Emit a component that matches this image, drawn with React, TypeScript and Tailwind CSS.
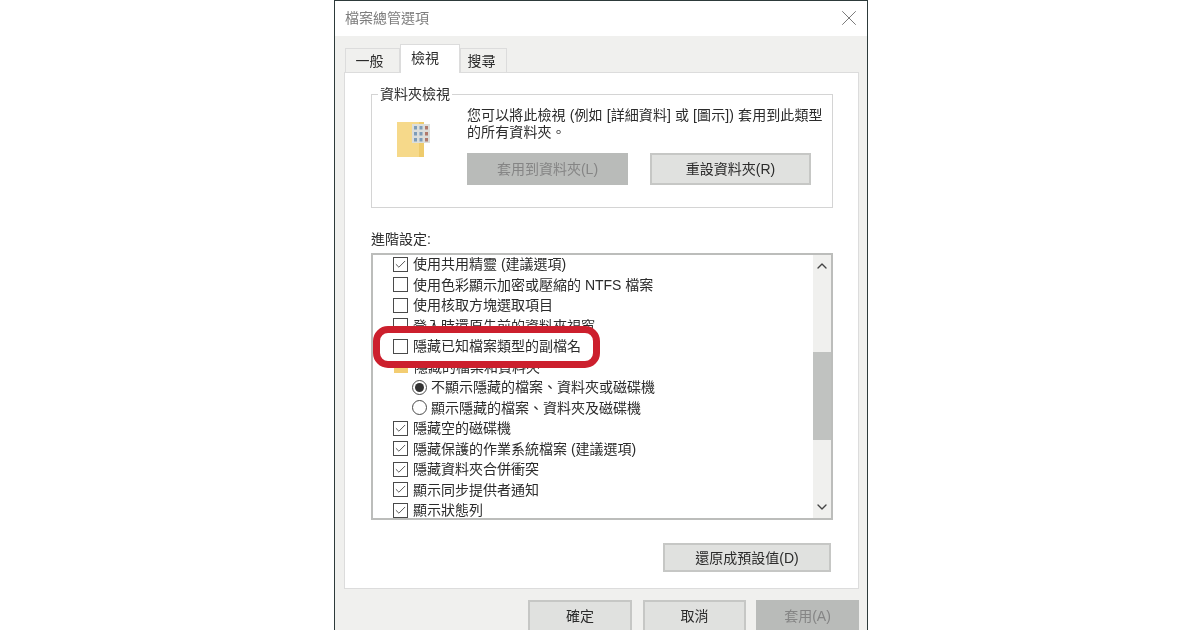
import { Check, ChevronDown, ChevronUp, X } from "lucide-react";
import type { ReactNode } from "react";

const cjk = "font-['Liberation_Sans','Noto_Sans_CJK_TC',sans-serif]";

function CheckBox({ checked }: { checked?: boolean }) {
  return (
    <span className="flex h-[15px] w-[15px] shrink-0 items-center justify-center border border-[#4a4a4a] bg-white">
      {checked && <Check size={13} strokeWidth={1.5} className="text-[#333]" />}
    </span>
  );
}

function Row({ checked, children }: { checked?: boolean; children: ReactNode }) {
  return (
    <div className="flex h-[20.5px] shrink-0 items-center gap-[5px] pl-[20px]">
      <CheckBox checked={checked} />
      <span className="whitespace-nowrap">{children}</span>
    </div>
  );
}

function Radio({ selected, children }: { selected?: boolean; children: ReactNode }) {
  return (
    <div className="flex h-[20.5px] shrink-0 items-center gap-[4px] pl-[39px]">
      <span className="flex h-[15px] w-[15px] shrink-0 items-center justify-center rounded-full border border-[#4a4a4a] bg-white">
        {selected && <span className="h-[9px] w-[9px] rounded-full bg-[#333]" />}
      </span>
      <span className="whitespace-nowrap">{children}</span>
    </div>
  );
}

function Button({ disabled, className, children }: { disabled?: boolean; className: string; children: ReactNode }) {
  return (
    <div
      className={`flex items-center justify-center border-2 text-sm ${
        disabled ? "border-[#b9bbb9] bg-[#b9bbb9] text-[#858585]" : "border-[#c6c7c5] bg-[#e0e1df] text-[#2b2b2b]"
      } ${className}`}
    >
      {children}
    </div>
  );
}

function FolderIcon() {
  return (
    <svg width="34" height="38" viewBox="0 0 34 38" className="shrink-0">
      <rect x="0" y="1" width="27" height="35" fill="#f6d98a" />
      <rect x="22" y="1" width="5" height="35" fill="#eecb6c" />
      <rect x="15" y="3" width="18" height="19" fill="#dcdedb" />
      {[5, 11, 17].flatMap((y) =>
        [17, 22.5, 28].map((x) => (
          <rect key={`${x}-${y}`} x={x} y={y} width="3" height="3.5" fill={x === 28 ? "#b07a6c" : "#7d9cb8"} />
        )),
      )}
    </svg>
  );
}

export default function App() {
  return (
    <div className={`flex h-[630px] w-[1200px] justify-center overflow-hidden bg-white text-sm text-[#2b2b2b] ${cjk}`}>
      <div className="ml-[2px] flex h-[631px] w-[534px] flex-col border border-b-0 border-[#2d3a3a] blur-[0.45px]">
        <div className="flex h-[35px] shrink-0 items-center justify-between bg-white pb-[2px] pl-[10px] pr-[5px] text-[#7d7d7d]">
          <span>檔案總管選項</span>
          <X size={26} strokeWidth={0.9} className="text-[#777]" />
        </div>

        <div className="flex flex-1 flex-col bg-[#f0f0ee] pl-[9px] pr-[8px]">
          <div className="flex h-[36px] shrink-0 items-end pl-px">
            <div className="flex h-[24px] w-[55px] items-center justify-center border border-b-0 border-[#dcdcdc] bg-[#f0f0ee] pr-[6px]">一般</div>
            <div className="relative z-10 -mb-px flex h-[29px] w-[60px] items-start justify-center border border-b-0 border-[#dcdcdc] bg-white pr-[10px] pt-[3px]">檢視</div>
            <div className="flex h-[24px] w-[47px] items-center justify-center border border-b-0 border-[#dcdcdc] bg-[#f0f0ee] pr-[4px]">搜尋</div>
          </div>

          <div className="flex h-[517px] shrink-0 flex-col border border-[#dcdcdc] bg-white pl-[26px] pr-[25px] pt-[21px]">
            <div className="relative flex h-[114px] shrink-0 gap-[36px] border border-[#d4d4d4] pl-[25px] pt-[12px]">
              <span className="absolute left-[6px] top-[-11px] bg-white px-[2px] leading-[20px]">資料夾檢視</span>
              <div className="pt-[14px]">
                <FolderIcon />
              </div>
              <div className="flex flex-col">
                <p className="w-[360px] leading-[17px] tracking-[0.1px]">您可以將此檢視 (例如 [詳細資料] 或 [圖示]) 套用到此類型的所有資料夾。</p>
                <div className="mt-[12px] flex gap-[22px]">
                  <Button disabled className="h-[32px] w-[161px]">套用到資料夾(L)</Button>
                  <Button className="h-[32px] w-[161px]">重設資料夾(R)</Button>
                </div>
              </div>
            </div>

            <div className="mt-[21px] h-[20px] shrink-0 leading-[20px]">進階設定:</div>

            <div className="mt-[4px] flex h-[267px] shrink-0 border-2 border-[#bcbdbb]">
              <div className="min-w-0 flex-1 overflow-hidden">
                <div className="-mt-px flex flex-col">
                  <Row checked>使用共用精靈 (建議選項)</Row>
                  <Row>使用色彩顯示加密或壓縮的 NTFS 檔案</Row>
                  <Row>使用核取方塊選取項目</Row>
                  <Row>登入時還原先前的資料夾視窗</Row>
                  <div className="relative z-10">
                    <div className="absolute left-0 top-[-10px] h-[42px] w-[227px] rounded-[15px] border-[7px] border-[#cc1f2d] bg-white" />
                    <div className="relative">
                      <Row>隱藏已知檔案類型的副檔名</Row>
                    </div>
                  </div>
                  <div className="flex h-[20.5px] shrink-0 items-center gap-[6px] pl-[21px]">
                    <span className="h-[12px] w-[14px] shrink-0 bg-[#f3cd72]" />
                    <span>隱藏的檔案和資料夾</span>
                  </div>
                  <Radio selected>不顯示隱藏的檔案、資料夾或磁碟機</Radio>
                  <Radio>顯示隱藏的檔案、資料夾及磁碟機</Radio>
                  <Row checked>隱藏空的磁碟機</Row>
                  <Row checked>隱藏保護的作業系統檔案 (建議選項)</Row>
                  <Row checked>隱藏資料夾合併衝突</Row>
                  <Row checked>顯示同步提供者通知</Row>
                  <Row checked>顯示狀態列</Row>
                </div>
              </div>
              <div className="flex w-[18px] shrink-0 flex-col bg-[#f0f0ee]">
                <div className="flex h-[97px] justify-center pt-[3px]">
                  <ChevronUp size={16} strokeWidth={2} className="text-[#444]" />
                </div>
                <div className="h-[88px] bg-[#c0c2c0]" />
                <div className="flex flex-1 items-end justify-center pb-[3px]">
                  <ChevronDown size={16} strokeWidth={2} className="text-[#444]" />
                </div>
              </div>
            </div>

            <div className="mt-[23px] flex justify-end pr-[2px]">
              <Button className="h-[29px] w-[168px]">還原成預設值(D)</Button>
            </div>
          </div>

          <div className="mt-[11px] flex justify-end gap-[10px]">
            <Button className="mr-px h-[32px] w-[104px]">確定</Button>
            <Button className="h-[32px] w-[103px]">取消</Button>
            <Button disabled className="h-[32px] w-[103px]">套用(A)</Button>
          </div>
        </div>
      </div>
    </div>
  );
}
